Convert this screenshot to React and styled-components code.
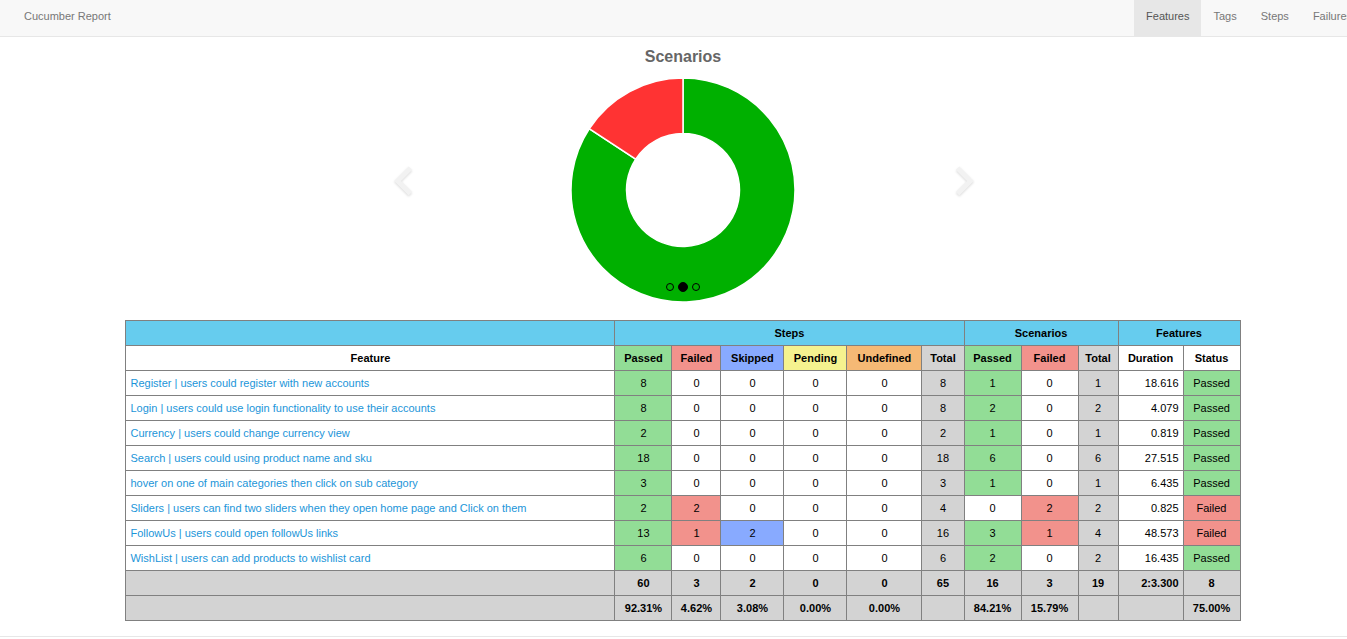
import React from 'react'
import styled, { createGlobalStyle } from 'styled-components';

const GlobalStyle = createGlobalStyle`
    html, body {
        margin: 0;
        padding: 0;
        background: #fff;
        font-family: "Liberation Sans", Arial, sans-serif;
        overflow-x: hidden;
    }
`;

const tones = {
    passed: '#92dd96',
    failed: '#f2928c',
    skipped: '#88aaff',
    pending: '#f5f28f',
    undefined: '#f5b975',
    total: '#d3d3d3',
    head: '#66ccee',
    none: '#ffffff',
};

const features = [
    { name: 'Register', desc: 'users could register with new accounts', steps: [8, 0, 0, 0, 0, 8], sc: [1, 0, 1], duration: '18.616', status: 'Passed' },
    { name: 'Login', desc: 'users could use login functionality to use their accounts', steps: [8, 0, 0, 0, 0, 8], sc: [2, 0, 2], duration: '4.079', status: 'Passed' },
    { name: 'Currency', desc: 'users could change currency view', steps: [2, 0, 0, 0, 0, 2], sc: [1, 0, 1], duration: '0.819', status: 'Passed' },
    { name: 'Search', desc: 'users could using product name and sku', steps: [18, 0, 0, 0, 0, 18], sc: [6, 0, 6], duration: '27.515', status: 'Passed' },
    { name: 'hover on one of main categories then click on sub category', desc: null, steps: [3, 0, 0, 0, 0, 3], sc: [1, 0, 1], duration: '6.435', status: 'Passed' },
    { name: 'Sliders', desc: 'users can find two sliders when they open home page and Click on them', steps: [2, 2, 0, 0, 0, 4], sc: [0, 2, 2], duration: '0.825', status: 'Failed' },
    { name: 'FollowUs', desc: 'users could open followUs links', steps: [13, 1, 2, 0, 0, 16], sc: [3, 1, 4], duration: '48.573', status: 'Failed' },
    { name: 'WishList', desc: 'users can add products to wishlist card', steps: [6, 0, 0, 0, 0, 6], sc: [2, 0, 2], duration: '16.435', status: 'Passed' },
];

const stepTones = ['passed', 'failed', 'skipped', 'pending', 'undefined'];
const scTones = ['passed', 'failed'];
const colWidths = [489, 57, 49, 63, 63, 75, 42, 57, 57, 40, 65, 57];

const totals = ['60', '3', '2', '0', '0', '65', '16', '3', '19', '2:3.300', '8'];
const percents = ['92.31%', '4.62%', '3.08%', '0.00%', '0.00%', '', '84.21%', '15.79%', '', '', '75.00%'];

// donut slice path, angles in degrees clockwise from top
function arcPath(cx, cy, R, r, a0, a1) {
    const rad = (a) => (a * Math.PI) / 180;
    const pt = (rr, a) => [cx + rr * Math.sin(rad(a)), cy - rr * Math.cos(rad(a))];
    const large = a1 - a0 > 180 ? 1 : 0;
    const [x0, y0] = pt(R, a0);
    const [x1, y1] = pt(R, a1);
    const [x2, y2] = pt(r, a1);
    const [x3, y3] = pt(r, a0);
    return `M ${x0} ${y0} A ${R} ${R} 0 ${large} 1 ${x1} ${y1} L ${x2} ${y2} A ${r} ${r} 0 ${large} 0 ${x3} ${y3} Z`;
}

function Donut({ passed, failed }) {
    const total = passed + failed;
    const passAngle = (passed / total) * 360;
    return (
        <svg width="226" height="226" viewBox="0 0 226 226">
            <path d={arcPath(113, 113, 112, 56.5, 0, passAngle)} fill="#00b000" stroke="#fff" strokeWidth="1.5" />
            <path d={arcPath(113, 113, 112, 56.5, passAngle, 360)} fill="#ff3333" stroke="#fff" strokeWidth="1.5" />
        </svg>
    );
}

function Chevron({ dir }) {
    const pts = dir === 'left' ? '16,3 4,15 16,27' : '4,3 16,15 4,27';
    return (
        <svg width="22" height="32" viewBox="0 0 20 30">
            <polyline points={pts} fill="none" stroke="#f2f2f2" strokeWidth="4.5" strokeLinejoin="miter" />
        </svg>
    );
}

function App() {
    return (
        <Page>
            <GlobalStyle />
            <Navbar>
                <Brand>Cucumber Report</Brand>
                <Nav>
                    <NavItem $active>Features</NavItem>
                    <NavItem>Tags</NavItem>
                    <NavItem>Steps</NavItem>
                    <NavItem>Failures</NavItem>
                </Nav>
            </Navbar>
            <Main>
                <Carousel>
                    <Title>Scenarios</Title>
                    <ChartWrap>
                        <Donut passed={16} failed={3} />
                        <Dots>
                            <Dot />
                            <Dot $active />
                            <Dot />
                        </Dots>
                    </ChartWrap>
                    <Arrow $side="left"><Chevron dir="left" /></Arrow>
                    <Arrow $side="right"><Chevron dir="right" /></Arrow>
                </Carousel>

                <Table>
                    <colgroup>
                        {colWidths.map((w, i) => <col key={i} style={{ width: w }} />)}
                    </colgroup>
                    <thead>
                        <tr>
                            <Th $tone="head"></Th>
                            <Th $tone="head" colSpan={6}>Steps</Th>
                            <Th $tone="head" colSpan={3}>Scenarios</Th>
                            <Th $tone="head" colSpan={2}>Features</Th>
                        </tr>
                        <tr>
                            <Th>Feature</Th>
                            <Th $tone="passed">Passed</Th>
                            <Th $tone="failed">Failed</Th>
                            <Th $tone="skipped">Skipped</Th>
                            <Th $tone="pending">Pending</Th>
                            <Th $tone="undefined">Undefined</Th>
                            <Th $tone="total">Total</Th>
                            <Th $tone="passed">Passed</Th>
                            <Th $tone="failed">Failed</Th>
                            <Th $tone="total">Total</Th>
                            <Th>Duration</Th>
                            <Th>Status</Th>
                        </tr>
                    </thead>
                    <tbody>
                        {features.map((f) => (
                            <tr key={f.name}>
                                <FeatureCell>
                                    <FeatureLink>
                                        {f.desc ? `${f.name} | ${f.desc}` : f.name}
                                    </FeatureLink>
                                </FeatureCell>
                                {f.steps.map((v, i) => (
                                    <Td key={i} $tone={i === 5 ? 'total' : v > 0 ? stepTones[i] : 'none'}>{v}</Td>
                                ))}
                                {f.sc.map((v, i) => (
                                    <Td key={'s' + i} $tone={i === 2 ? 'total' : v > 0 ? scTones[i] : 'none'}>{v}</Td>
                                ))}
                                <Td $align="right">{f.duration}</Td>
                                <Td $tone={f.status === 'Passed' ? 'passed' : 'failed'}>{f.status}</Td>
                            </tr>
                        ))}
                    </tbody>
                    <tfoot>
                        <tr>
                            <Td $tone="total" $bold></Td>
                            {totals.map((v, i) => (
                                <Td key={i} $tone="total" $bold $align={i === 9 ? 'right' : 'center'}>{v}</Td>
                            ))}
                        </tr>
                        <tr>
                            <Td $tone="total" $bold></Td>
                            {percents.map((v, i) => (
                                <Td key={i} $tone="total" $bold>{v}</Td>
                            ))}
                        </tr>
                    </tfoot>
                </Table>
            </Main>
            <Footer />
        </Page>
    )
}

const Page = styled.div`
    width: 100%;
`;

const Navbar = styled.div`
    display: flex;
    align-items: stretch;
    height: 36px;
    background: #f8f8f8;
    border-bottom: 1px solid #e7e7e7;
`;

const Brand = styled.div`
    padding: 9px 0 0 24px;
    line-height: 14px;
    font-size: 11px;
    color: #777;
`;

const Nav = styled.div`
    display: flex;
    margin-left: auto;
    margin-right: -17px;
    flex-shrink: 0;
`;

const NavItem = styled.div`
    padding: 9px 12px 0;
    line-height: 14px;
    font-size: 11px;
    background: ${(p) => (p.$active ? '#e7e7e7' : 'transparent')};
    color: ${(p) => (p.$active ? '#555' : '#777')};
`;

const Main = styled.div`
    display: flex;
    flex-direction: column;
    align-items: center;
    padding-left: 19px;
    padding-top: 10px;
`;

const Carousel = styled.div`
    position: relative;
    width: 582px;
    display: flex;
    flex-direction: column;
    align-items: center;
`;

const Title = styled.div`
    font-size: 16px;
    line-height: 20px;
    font-weight: bold;
    color: #666;
`;

const ChartWrap = styled.div`
    position: relative;
    margin-top: 10px;
    width: 226px;
    height: 226px;
    svg {
        display: block;
    }
`;

const Dots = styled.div`
    position: absolute;
    left: 0;
    right: 0;
    top: 205px;
    display: flex;
    justify-content: center;
    align-items: center;
    gap: 4px;
`;

const Dot = styled.span`
    box-sizing: border-box;
    width: ${(p) => (p.$active ? '10px' : '8px')};
    height: ${(p) => (p.$active ? '10px' : '8px')};
    border-radius: 50%;
    border: 1px solid #000;
    background: ${(p) => (p.$active ? '#000' : 'transparent')};
`;

const Arrow = styled.div`
    position: absolute;
    top: 118px;
    ${(p) => (p.$side === 'left' ? 'left: 1px;' : 'right: -1px;')}
    svg {
        display: block;
        filter: drop-shadow(0 1px 1px rgba(0, 0, 0, 0.15));
    }
`;

const Table = styled.table`
    margin-top: 17px;
    width: 1112px;
    table-layout: fixed;
    border-collapse: collapse;
    border: 1px solid #808080;
    font-size: 11px;
    color: #000;
`;

const Th = styled.th`
    height: 24px;
    padding: 0 4px;
    border: 1px solid #808080;
    font-weight: bold;
    text-align: center;
    white-space: nowrap;
    background: ${(p) => tones[p.$tone || 'none']};
`;

const Td = styled.td`
    height: 24px;
    padding: 0 4px;
    border: 1px solid #808080;
    text-align: ${(p) => p.$align || 'center'};
    font-weight: ${(p) => (p.$bold ? 'bold' : 'normal')};
    white-space: nowrap;
    background: ${(p) => tones[p.$tone || 'none']};
`;

const FeatureCell = styled.td`
    height: 24px;
    padding: 0 4px;
    border: 1px solid #808080;
    text-align: left;
    white-space: nowrap;
    overflow: hidden;
`;

const FeatureLink = styled.a`
    color: #1b95d9;
    text-decoration: none;
    cursor: pointer;
`;

const Footer = styled.div`
    margin-top: 15px;
    height: 4px;
    border-top: 1px solid #e7e7e7;
`;

export default App;
